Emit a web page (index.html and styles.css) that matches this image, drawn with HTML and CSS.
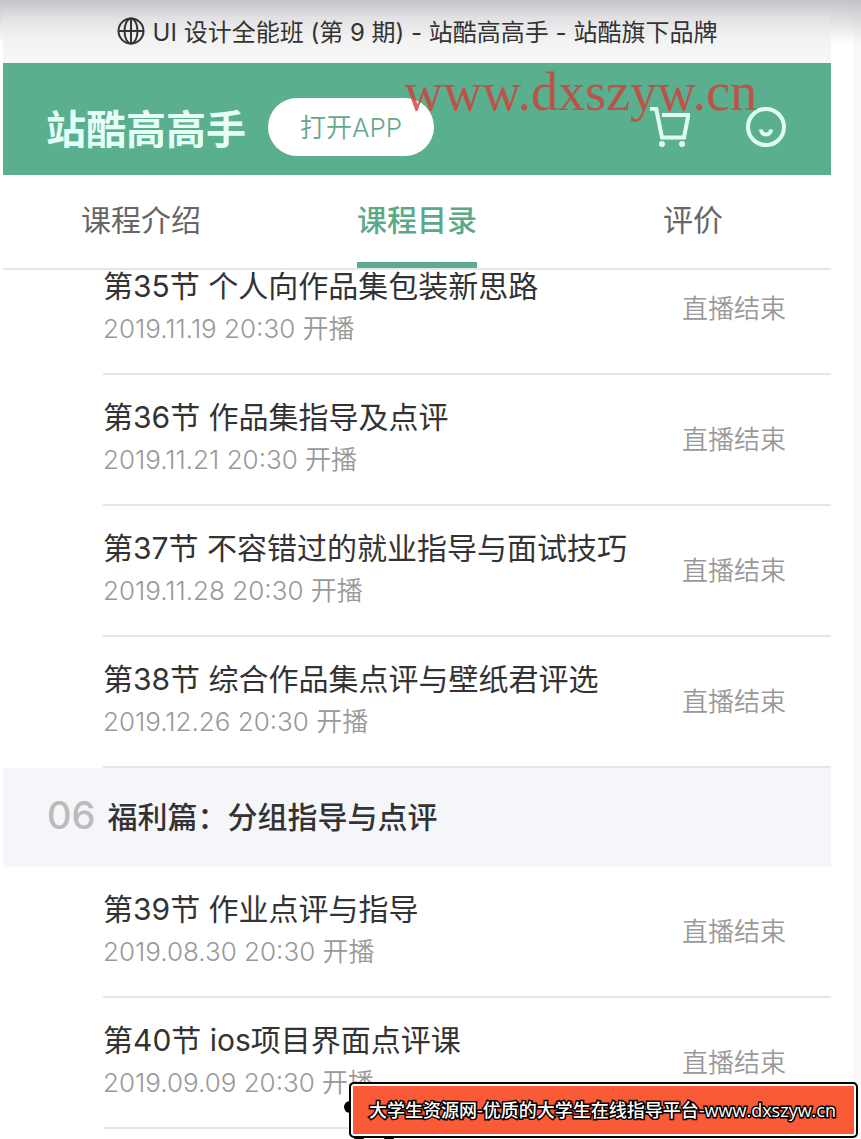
FILE: index.html
```
<!DOCTYPE html>
<html lang="zh-CN">
<head>
  <meta charset="utf-8">
  <meta name="viewport" content="width=device-width, initial-scale=1">
  <title>UI设计全能班(第9期) - 站酷高高手</title>
  <link rel="stylesheet" href="styles.css">
</head>
<body>
  <div class="page">
    <div class="title-bar">
      <svg class="globe" viewBox="0 0 28 28" aria-hidden="true">
        <circle cx="14" cy="14" r="12.5"/>
        <ellipse cx="14" cy="14" rx="6.5" ry="12.5"/>
        <path d="M14 1.5v25M1.5 14h25"/>
      </svg>
      <span>UI 设计全能班 (第 9 期) - 站酷高高手 - 站酷旗下品牌</span>
    </div>

    <header class="header">
      <a class="logo" href="#">站酷高高手</a>
      <button class="open-app">打开APP</button>
      <nav class="header-icons">
        <a href="#" aria-label="购物车">
          <svg class="icon" viewBox="0 0 40 40">
            <path d="M0 1.8h6.2L12 30.5h22L38.4 8H12"/>
            <circle class="wheel" cx="12" cy="37" r="3"/>
            <circle class="wheel" cx="32" cy="37" r="3"/>
          </svg>
        </a>
        <a href="#" aria-label="我的">
          <svg class="icon" viewBox="0 0 40 40">
            <circle cx="20" cy="20" r="18"/>
            <path d="M15 22.500a5 5 0 0 0 10 0"/>
          </svg>
        </a>
      </nav>
      <div class="watermark">www.dxszyw.cn</div>
    </header>

    <nav class="tabs">
      <a class="tab" href="#">课程介绍</a>
      <a class="tab active" href="#">课程目录</a>
      <a class="tab" href="#">评价</a>
    </nav>

    <main>
      <ul class="lessons scrolled">
        <li class="lesson">
          <div>
            <div class="lesson-title">第35节 个人向作品集包装新思路</div>
            <div class="lesson-date">2019.11.19 20:30 开播</div>
          </div>
          <span class="lesson-status">直播结束</span>
        </li>
        <li class="lesson">
          <div>
            <div class="lesson-title">第36节 作品集指导及点评</div>
            <div class="lesson-date">2019.11.21 20:30 开播</div>
          </div>
          <span class="lesson-status">直播结束</span>
        </li>
        <li class="lesson">
          <div>
            <div class="lesson-title">第37节 不容错过的就业指导与面试技巧</div>
            <div class="lesson-date">2019.11.28 20:30 开播</div>
          </div>
          <span class="lesson-status">直播结束</span>
        </li>
        <li class="lesson">
          <div>
            <div class="lesson-title">第38节 综合作品集点评与壁纸君评选</div>
            <div class="lesson-date">2019.12.26 20:30 开播</div>
          </div>
          <span class="lesson-status">直播结束</span>
        </li>
      </ul>

      <h2 class="chapter"><span class="chapter-number">06</span>福利篇：分组指导与点评</h2>

      <ul class="lessons">
        <li class="lesson">
          <div>
            <div class="lesson-title">第39节 作业点评与指导</div>
            <div class="lesson-date">2019.08.30 20:30 开播</div>
          </div>
          <span class="lesson-status">直播结束</span>
        </li>
        <li class="lesson">
          <div>
            <div class="lesson-title">第40节 ios项目界面点评课</div>
            <div class="lesson-date">2019.09.09 20:30 开播</div>
          </div>
          <span class="lesson-status">直播结束</span>
        </li>
      </ul>
    </main>
  </div>

  <div class="banner">
    <svg class="banner-dots" viewBox="0 0 60 60" aria-hidden="true">
      <circle cx="7" cy="26" r="6"/>
      <circle cx="16" cy="54" r="6"/>
      <circle cx="46" cy="54" r="6"/>
    </svg>
    <div class="banner-text">大学生资源网-优质的大学生在线指导平台-www.dxszyw.cn</div>
  </div>
</body>
</html>
```
FILE: styles.css
```
* {
  box-sizing: border-box;
}

body {
  margin: 0;
  position: relative;
  min-height: 100vh;
  font-family: Inter, "Noto Sans CJK SC", sans-serif;
  color: #333;
  background: linear-gradient(#c3c4c8, rgba(255, 255, 255, 0) 44px), linear-gradient(to left, #f9f9fa 8px, #fff 8px);
}

a {
  color: inherit;
  text-decoration: none;
}

.page {
  padding: 0 30px 0 3px;
}

.title-bar {
  display: flex;
  align-items: center;
  justify-content: center;
  gap: 8px;
  height: 63px;
  padding-bottom: 2px;
  font-size: 24px;
  background: linear-gradient(#c3c4c8, #e2e2e4 18px, #f3f3f4 40px, #f7f7f7);
}

.globe {
  width: 28px;
  height: 28px;
  fill: none;
  stroke: #333;
  stroke-width: 2;
}

.header {
  position: relative;
  display: flex;
  align-items: center;
  height: 112px;
  padding: 15px 45px 0 43px;
  background: #5ab08e;
}

.logo {
  font-size: 40px;
  font-weight: 700;
  color: #e6fff7;
}

.open-app {
  height: 58px;
  margin-left: 22px;
  padding: 0 32px 2px;
  border: none;
  border-radius: 29px;
  background: #fff;
  color: #65a78f;
  font-family: inherit;
  font-size: 26px;
  font-weight: 350;
  cursor: pointer;
}

.header-icons {
  display: flex;
  gap: 56px;
  margin-left: auto;
}

.icon {
  display: block;
  width: 40px;
  height: 40px;
  fill: none;
  stroke: #e0fff4;
  stroke-width: 4;
}

.wheel {
  fill: #e0fff4;
  stroke: none;
}

.watermark {
  position: absolute;
  top: 0;
  right: 74px;
  font-family: "Liberation Serif", serif;
  font-size: 54px;
  line-height: 58px;
  color: rgba(211, 60, 55, 0.8);
  pointer-events: none;
}

.tabs {
  position: relative;
  z-index: 1;
  display: grid;
  grid-template-columns: repeat(3, 1fr);
  justify-items: center;
  height: 95px;
  border-bottom: 2px solid #e6e6e6;
  background: #fff;
}

.tab {
  padding-top: 4px;
  font-size: 30px;
  line-height: 83px;
  color: #666;
}

.tab.active {
  border-bottom: 6px solid #5fa98d;
  color: #5aaa8a;
  font-weight: 500;
}

.lessons {
  margin: 0;
  padding: 0 0 0 100px;
  list-style: none;
}

/* first list is scrolled up under the tabs */
.lessons.scrolled {
  margin-top: -26px;
}

.lesson {
  display: flex;
  align-items: center;
  justify-content: space-between;
  height: 131px;
  padding: 0 45px 4px 0;
  border-bottom: 2px solid #e6e6e6;
}

.lesson-title {
  font-size: 30px;
  line-height: 44px;
}

.lesson-date {
  font-size: 26px;
  font-weight: 350;
  line-height: 42px;
  color: #999;
}

.lesson-status {
  font-size: 26px;
  font-weight: 350;
  color: #999;
}

.chapter {
  display: flex;
  align-items: center;
  gap: 12px;
  height: 99px;
  margin: 0;
  padding: 0 0 6px 44px;
  background: #f5f6fa;
  font-size: 30px;
  font-weight: 500;
}

.chapter-number {
  font-size: 38px;
  color: #bbb;
}

.banner {
  position: absolute;
  right: 3px;
  bottom: 1px;
}

.banner-dots {
  position: absolute;
  left: -6px;
  bottom: -3px;
  width: 60px;
  height: 60px;
}

.banner-text {
  position: relative;
  padding: 0 20px 0 18px;
  border: 2px solid #000;
  border-radius: 5px;
  background: #fb5a36;
  box-shadow: inset 0 0 0 2px #fff;
  font-family: "Open Sans", "Noto Sans CJK SC", sans-serif;
  font-size: 18px;
  font-weight: 500;
  line-height: 52px;
  white-space: nowrap;
  color: #fff;
  -webkit-text-stroke: 3px #000;
  paint-order: stroke fill;
}
```
